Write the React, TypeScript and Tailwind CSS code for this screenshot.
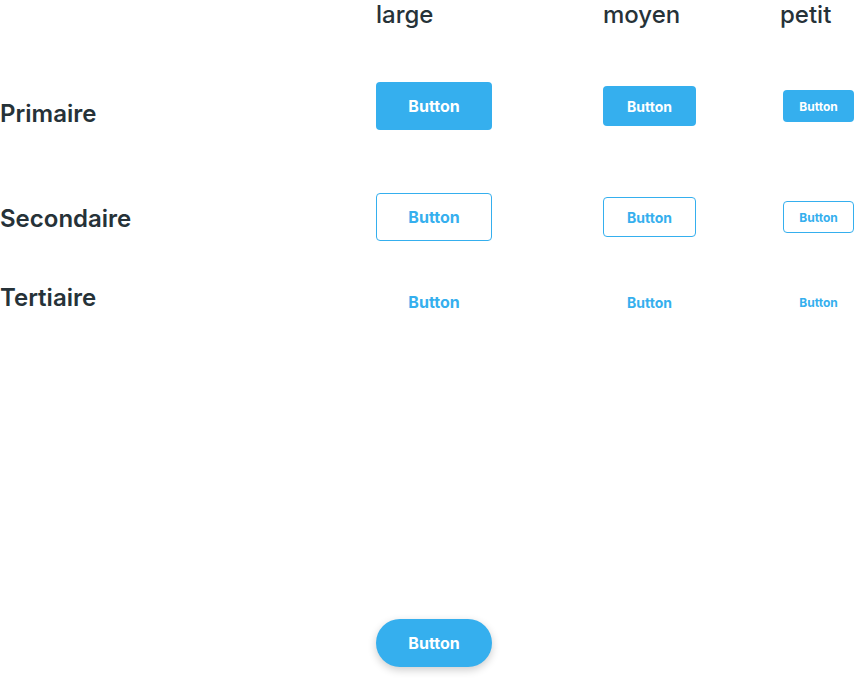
const font = { fontFamily: "Inter, 'Noto Sans', sans-serif" };

type Size = "large" | "moyen" | "petit";
type Kind = "primary" | "secondary" | "tertiary";

const sizeClass: Record<Size, string> = {
  large: "w-[116px] h-12 text-base",
  moyen: "w-[93px] h-10 text-sm pt-[2px]",
  petit: "w-[71px] h-8 text-xs pt-[2px]",
};

const kindClass: Record<Kind, string> = {
  primary: "bg-[#35afee] text-white rounded",
  secondary: "bg-white text-[#35afee] border border-[#35afee] rounded",
  tertiary: "bg-transparent text-[#35afee]",
};

function Btn({ size, kind }: { size: Size; kind: Kind }) {
  return (
    <button
      className={`${sizeClass[size]} ${kindClass[kind]} flex items-center justify-center font-bold`}
    >
      Button
    </button>
  );
}

function Row({
  label,
  kind,
  height,
  labelShift,
}: {
  label: string;
  kind: Kind;
  height: string;
  labelShift: string;
}) {
  return (
    <div className={`flex items-center ${height}`}>
      <div className={`w-[376px] text-2xl font-semibold text-[#263238] ${labelShift}`}>{label}</div>
      <div className="w-[227px]">
        <Btn size="large" kind={kind} />
      </div>
      <div className="w-[180px]">
        <Btn size="moyen" kind={kind} />
      </div>
      <div className="flex-1">
        <Btn size="petit" kind={kind} />
      </div>
    </div>
  );
}

export default function App() {
  return (
    <div className="w-[854px] h-[679px] bg-white overflow-hidden" style={font}>
      <div className="flex h-[30px] items-center text-2xl font-medium text-[#263238]">
        <div className="w-[376px]" />
        <div className="w-[227px]">large</div>
        <div className="w-[177px]">moyen</div>
        <div className="flex-1">petit</div>
      </div>
      <div className="mt-8">
        <Row label="Primaire" kind="primary" height="h-[88px]" labelShift="mt-[16px]" />
        <div className="mt-[23px]">
          <Row label="Secondaire" kind="secondary" height="h-[88px]" labelShift="mt-[4px]" />
        </div>
        <div className="mt-[17px]">
          <Row label="Tertiaire" kind="tertiary" height="h-12" labelShift="-mt-[8px]" />
        </div>
      </div>
      <div className="mt-[293px] pl-[376px]">
        <button className="w-[116px] h-12 rounded-full bg-[#35afee] text-white text-base font-bold shadow-[0_3px_8px_rgba(0,0,0,0.2)]">
          Button
        </button>
      </div>
    </div>
  );
}
